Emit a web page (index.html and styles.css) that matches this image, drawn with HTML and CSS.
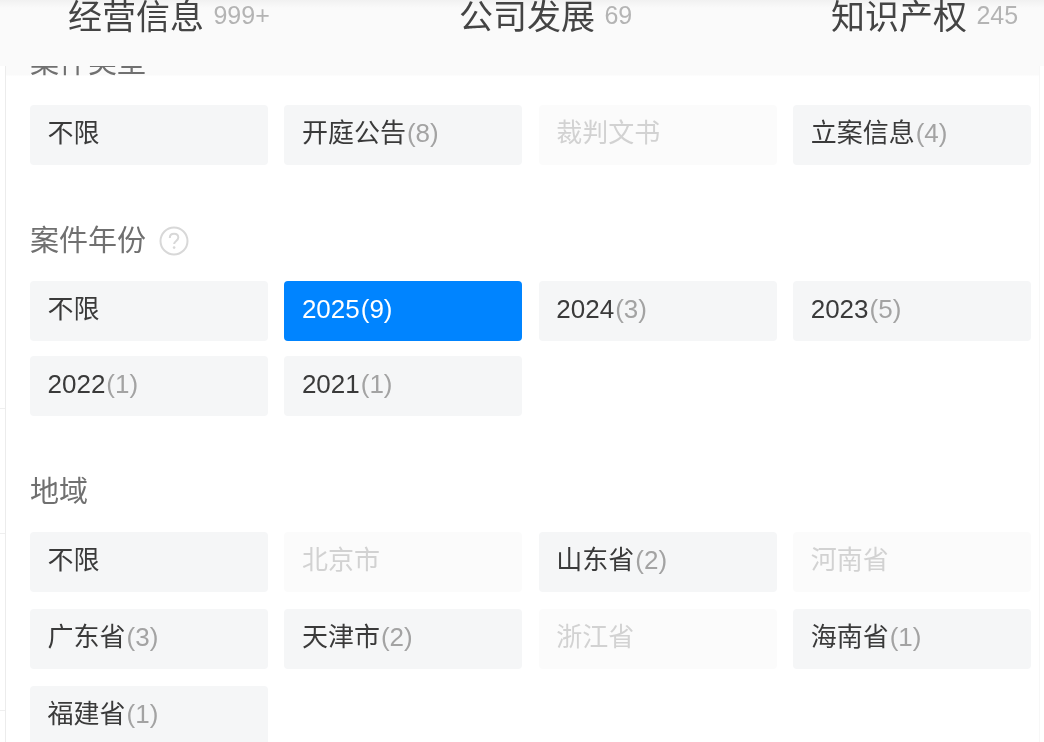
FILE: index.html
```html
<!DOCTYPE html>
<html lang="zh-CN">
<head>
<meta charset="utf-8">
<title>筛选</title>
<link rel="stylesheet" href="styles.css">
</head>
<body>
<header class="tabs">
  <div class="tab tab-a">经营信息 <span class="tab-count">999+</span></div>
  <div class="tab tab-b">公司发展 <span class="tab-count">69</span></div>
  <div class="tab tab-c">知识产权 <span class="tab-count">245</span></div>
</header>
<i class="tick tick-a"></i>
<i class="tick tick-b"></i>
<i class="tick tick-c"></i>
<main class="panel">
  <section class="group group-first">
    <h3 class="group-title">案件类型</h3>
    <div class="chips">
      <div class="chip">不限</div>
      <div class="chip">开庭公告<span class="num">(8)</span></div>
      <div class="chip off">裁判文书</div>
      <div class="chip">立案信息<span class="num">(4)</span></div>
    </div>
  </section>
  <section class="group">
    <h3 class="group-title">案件年份
      <svg class="help" viewBox="0 0 30 30" width="30" height="30" aria-hidden="true">
        <circle cx="15" cy="15" r="13.5" fill="none" stroke="#d8d8d8" stroke-width="2"/>
        <path d="M10.8 12c0-2.6 1.9-4.2 4.3-4.2s4.2 1.5 4.2 3.7c0 3.4-4.2 3.4-4.2 6.6" fill="none" stroke="#d8d8d8" stroke-width="2"/>
        <circle cx="15.1" cy="21.6" r="1.3" fill="#d8d8d8"/>
      </svg>
    </h3>
    <div class="chips chips-tight">
      <div class="chip">不限</div>
      <div class="chip active">2025<span class="num">(9)</span></div>
      <div class="chip">2024<span class="num">(3)</span></div>
      <div class="chip">2023<span class="num">(5)</span></div>
      <div class="chip">2022<span class="num">(1)</span></div>
      <div class="chip">2021<span class="num">(1)</span></div>
    </div>
  </section>
  <section class="group">
    <h3 class="group-title">地域</h3>
    <div class="chips">
      <div class="chip">不限</div>
      <div class="chip off">北京市</div>
      <div class="chip">山东省<span class="num">(2)</span></div>
      <div class="chip off">河南省</div>
      <div class="chip">广东省<span class="num">(3)</span></div>
      <div class="chip">天津市<span class="num">(2)</span></div>
      <div class="chip off">浙江省</div>
      <div class="chip">海南省<span class="num">(1)</span></div>
      <div class="chip">福建省<span class="num">(1)</span></div>
    </div>
  </section>
</main>
</body>
</html>
```
FILE: styles.css
```css
html, body { margin: 0; height: 742px; overflow: hidden; background: #fff; }
body {
  font-family: "Liberation Sans", "Noto Sans CJK SC", sans-serif;
  color: #333;
  filter: blur(0.5px);
  position: relative;
}
.tabs {
  height: 66px;
  background: linear-gradient(#f1f1f1 0, #fafafa 8px);
  display: flex;
  align-items: flex-start;
  position: relative;
  z-index: 1;
}
.tab {
  font-size: 34px;
  line-height: 30px;
  color: #444;
  white-space: nowrap;
  font-weight: 400;
}
.tab-a { margin-left: 68px; width: 391px; }
.tab-b { width: 372px; }
.tab-count {
  font-size: 25px;
  color: #b4b4b4;
  vertical-align: 5px;
}
.tick {
  position: absolute;
  left: 0;
  width: 5px;
  height: 1px;
  background: #efefef;
}
.tick-a { top: 408px; }
.tick-b { top: 533px; }
.tick-c { top: 710px; }
.panel {
  height: 676px;
  margin: 0 4px 0 5px;
  padding-left: 24px;
  border-left: 1px solid #ececec;
  border-right: 1px solid #f7f7f7;
  background: linear-gradient(#fafafa 9px, #fff 10px);
  overflow: hidden;
}
.group { margin-bottom: 52px; }
.group-first { margin-top: -27px; }
.group-first .group-title { margin-bottom: 20px; }
.group-title {
  margin: 0 0 18px;
  height: 46px;
  box-sizing: border-box;
  padding-top: 2px;
  font-size: 29px;
  line-height: 44px;
  font-weight: 400;
  color: #707070;
  display: flex;
  align-items: center;
  gap: 13px;
}
.chips {
  display: grid;
  grid-template-columns: repeat(4, 238px);
  column-gap: 16.4px;
  row-gap: 17px;
}
.chips-tight { row-gap: 15px; }
.chip {
  height: 60px;
  line-height: 57px;
  padding-left: 17.5px;
  background: #f5f6f7;
  border-radius: 4px;
  font-size: 26px;
  font-weight: 400;
  color: #3a3a3a;
  white-space: nowrap;
}
.num {
  font-size: 26px;
  color: #a3a3a3;
  margin-left: 1px;
}
.off { color: #d2d2d2; background: #fbfbfb; }
.active { background: #0084ff; color: #fff; }
.active .num { color: #fff; }
.help { flex: none; }
```
